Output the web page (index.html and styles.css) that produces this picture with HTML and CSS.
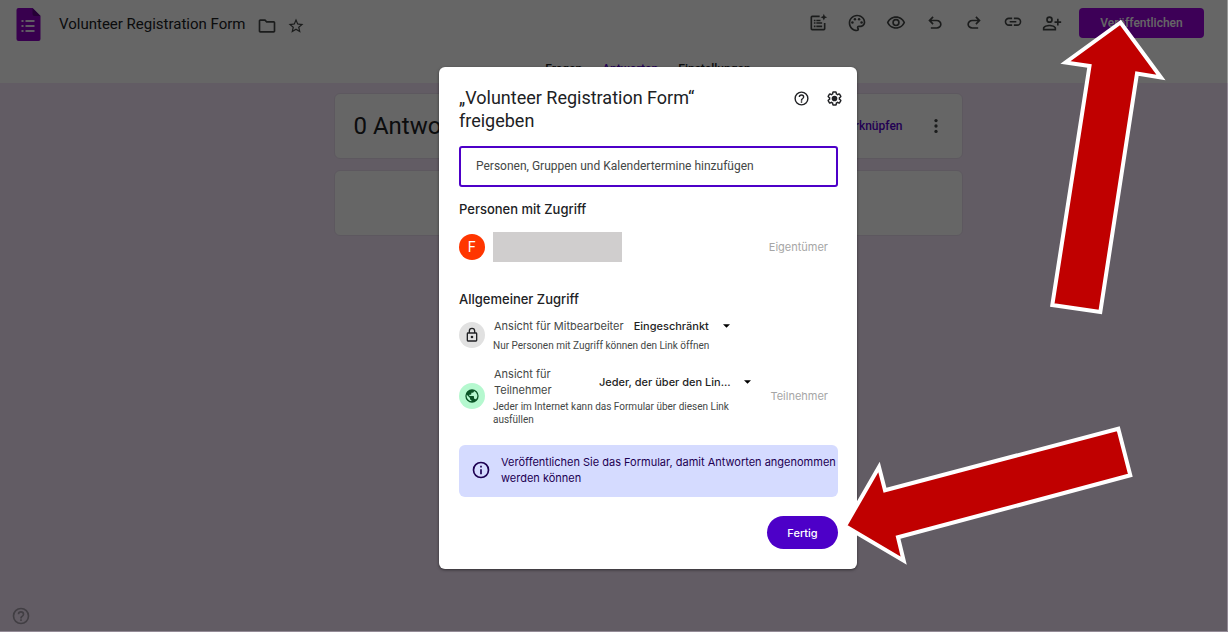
FILE: index.html
```html
<!DOCTYPE html>
<html lang="de">
<head>
<meta charset="utf-8">
<title>Volunteer Registration Form</title>
<link rel="stylesheet" href="styles.css">
</head>
<body>
<div class="page">
  <header class="header">
    <div class="topbar">
      <svg class="logo" viewBox="0 0 24 33" aria-hidden="true">
        <path fill="#8c00c4" d="M2 0h14l8 8v23a2 2 0 0 1-2 2H2a2 2 0 0 1-2-2V2a2 2 0 0 1 2-2z"/>
        <path fill="#5c0085" d="M16 0l8 8h-6a2 2 0 0 1-2-2z"/>
        <path fill="#f0e0f8" d="M5 12h2v2H5zm4 0h9v2H9zm-4 5h2v2H5zm4 0h9v2H9zm-4 5h2v2H5zm4 0h9v2H9z"/>
      </svg>
      <h1 class="doc-title">Volunteer Registration Form</h1>
      <div class="doc-actions">
        <button class="icon-button" aria-label="Verschieben"><svg class="icon" viewBox="0 0 24 24"><path d="M9.17 6l2 2H20v10H4V6h5.17M10 4H4c-1.1 0-1.99.9-1.99 2L2 18c0 1.1.9 2 2 2h16c1.1 0 2-.9 2-2V8c0-1.1-.9-2-2-2h-8l-2-2z"/></svg></button>
        <button class="icon-button" aria-label="Markieren"><svg class="icon icon-small" viewBox="0 0 24 24"><path d="M22 9.24l-7.19-.62L12 2 9.19 8.63 2 9.24l5.46 4.73L5.82 21 12 17.27 18.18 21l-1.63-7.03L22 9.24zM12 15.4l-3.76 2.27 1-4.28-3.32-2.88 4.38-.38L12 6.1l1.71 4.04 4.38.38-3.32 2.88 1 4.28L12 15.4z"/></svg></button>
      </div>
      <div class="tools">
        <button class="icon-button" aria-label="Formular erstellen"><svg class="icon" viewBox="0 0 24 24"><path d="M14 3v2H5v14h14v-7h2v7a2 2 0 0 1-2 2H5a2 2 0 0 1-2-2V5a2 2 0 0 1 2-2zM7 8h2v2H7zm3 0h5v2h-5zM7 11h2v2H7zm3 0h7v2h-7zM7 15h2v2H7zm3 0h7v2h-7zM19 1l1.2 2.8L23 5l-2.800 1.200L19 9l-1.200-2.800L15 5l2.800-1.200z"/></svg></button>
        <button class="icon-button" aria-label="Design anpassen"><svg class="icon" viewBox="0 0 24 24"><path d="M12 22C6.490 22 2 17.510 2 12S6.490 2 12 2s10 4.040 10 9c0 3.310-2.690 6-6 6h-1.770c-.28 0-.5.22-.5.5 0 .12.050.23.130.33.410.470.640 1.060.640 1.670A2.500 2.500 0 0 1 12 22zm0-18c-4.410 0-8 3.590-8 8s3.590 8 8 8c.28 0 .5-.22.500-.5a.54.54 0 0 0-.14-.35c-.410-.46-.63-1.050-.63-1.650a2.500 2.500 0 0 1 2.500-2.500H16c2.210 0 4-1.790 4-4 0-3.860-3.590-7-8-7z"/><circle cx="6.500" cy="11.500" r="1.500"/><circle cx="9.500" cy="7.500" r="1.500"/><circle cx="14.500" cy="7.500" r="1.500"/><circle cx="17.500" cy="11.500" r="1.500"/></svg></button>
        <button class="icon-button" aria-label="Vorschau"><svg class="icon" viewBox="0 0 24 24"><path d="M12 6a9.770 9.770 0 0 1 8.820 5.500 9.760 9.760 0 0 1-17.640 0A9.770 9.770 0 0 1 12 6m0-2C7 4 2.730 7.110 1 11.500 2.730 15.890 7 19 12 19s9.270-3.110 11-7.500C21.270 7.110 17 4 12 4zm0 5a2.500 2.500 0 1 1 0 5 2.500 2.500 0 0 1 0-5m0-2a4.500 4.500 0 1 0 0 9 4.500 4.500 0 0 0 0-9z"/></svg></button>
        <button class="icon-button" aria-label="Rückgängig"><svg class="icon" viewBox="0 0 24 24"><path d="M7 19v-2h7.100q1.575 0 2.738-1T18 13.500 16.838 11 14.100 10H7.800l2.600 2.600L9 14 4 9l5-5 1.400 1.400L7.800 8h6.300q2.425 0 4.163 1.575T20 13.500t-1.737 3.925T14.100 19z"/></svg></button>
        <button class="icon-button" aria-label="Wiederholen"><svg class="icon" viewBox="0 0 24 24"><path d="M9.900 19q-2.425 0-4.163-1.575T4 13.500t1.737-3.925T9.900 8h6.300l-2.600-2.600L15 4l5 5-5 5-1.400-1.400 2.600-2.600H9.900q-1.575 0-2.738 1T6 13.500 7.162 16 9.900 17H17v2z"/></svg></button>
        <button class="icon-button" aria-label="Link kopieren"><svg class="icon" viewBox="0 0 24 24"><path d="M3.900 10.500c0-1.710 1.390-3.100 3.100-3.100h4V5.500H7a5 5 0 0 0 0 10h4v-1.900H7c-1.710 0-3.100-1.390-3.100-3.100zM8 11.500h8v-2H8zm9-6h-4v1.900h4a3.100 3.100 0 0 1 0 6.200h-4v1.900h4a5 5 0 0 0 0-10z"/></svg></button>
        <button class="icon-button" aria-label="Mitbearbeiter hinzufügen"><svg class="icon" viewBox="0 0 24 24"><path d="M9 12a4 4 0 1 0 0-8 4 4 0 0 0 0 8zm0-6a2 2 0 1 1 0 4 2 2 0 0 1 0-4zm0 8c-2.670 0-8 1.340-8 4v3h16v-3c0-2.660-5.330-4-8-4zm6 5H3v-.99C3.200 17.290 6.300 16 9 16s5.800 1.290 6 2zm5-9V7h-2v3h-3v2h3v3h2v-3h3v-2z"/></svg></button>
      </div>
      <button class="publish">Veröffentlichen</button>
    </div>
    <nav class="tabs">
      <a class="tab" href="#fragen">Fragen</a>
      <a class="tab tab-active" href="#antworten">Antworten</a>
      <a class="tab" href="#einstellungen">Einstellungen</a>
    </nav>
  </header>
  <main class="content">
    <section class="card">
      <h2 class="card-title">0 Antworten</h2>
      <a class="card-link" href="#tabelle">Mit Google Tabellen verknüpfen</a>
      <button class="icon-button" aria-label="Weitere Optionen"><svg class="icon" viewBox="0 0 24 24"><circle cx="12" cy="5.500" r="2"/><circle cx="12" cy="12" r="2"/><circle cx="12" cy="18.500" r="2"/></svg></button>
    </section>
    <section class="card"></section>
  </main>
  <footer class="footer">
    <button class="icon-button help" aria-label="Hilfe"><svg class="icon" viewBox="0 0 24 24"><path d="M11 18h2v-2h-2v2zm1-16a10 10 0 1 0 0 20 10 10 0 0 0 0-20zm0 18a8 8 0 1 1 0-16 8 8 0 0 1 0 16zm0-14a4 4 0 0 0-4 4h2a2 2 0 1 1 4 0c0 2-3 1.750-3 5h2c0-2.250 3-2.500 3-5a4 4 0 0 0-4-4z"/></svg></button>
  </footer>
</div>

<div class="backdrop">
  <div class="dialog" role="dialog" aria-modal="true" aria-labelledby="dialog-title">
    <div class="dialog-head">
      <h2 class="dialog-title" id="dialog-title">„Volunteer Registration Form“ freigeben</h2>
      <div class="dialog-tools">
        <button class="icon-button" aria-label="Hilfe"><svg class="icon" viewBox="0 0 24 24"><path d="M11 18h2v-2h-2v2zm1-16a10 10 0 1 0 0 20 10 10 0 0 0 0-20zm0 18a8 8 0 1 1 0-16 8 8 0 0 1 0 16zm0-14a4 4 0 0 0-4 4h2a2 2 0 1 1 4 0c0 2-3 1.750-3 5h2c0-2.250 3-2.500 3-5a4 4 0 0 0-4-4z"/></svg></button>
        <button class="icon-button" aria-label="Einstellungen"><svg class="icon" viewBox="0 0 24 24"><path d="M13.850 22.250h-3.700c-.74 0-1.360-.54-1.450-1.270l-.27-1.890c-.27-.14-.53-.29-.79-.46l-1.800.72c-.7.260-1.470-.03-1.810-.65L2.200 15.530c-.35-.66-.2-1.440.36-1.880l1.530-1.190c-.01-.15-.02-.3-.02-.46 0-.15.010-.31.020-.46l-1.520-1.190c-.59-.45-.74-1.260-.37-1.880l1.850-3.190c.34-.62 1.110-.9 1.790-.63l1.810.73c.26-.17.520-.32.780-.46l.27-1.910c.090-.7.710-1.250 1.440-1.250h3.700c.74 0 1.360.54 1.450 1.270l.27 1.890c.27.140.53.290.79.460l1.800-.72c.71-.26 1.480.03 1.820.65l1.840 3.180c.36.660.2 1.440-.36 1.880l-1.520 1.190c.010.150.020.3.020.46s-.010.310-.020.460l1.520 1.190c.56.450.72 1.230.37 1.860l-1.860 3.220c-.34.620-1.110.9-1.800.63l-1.800-.72c-.26.170-.52.320-.78.460l-.27 1.910c-.1.680-.72 1.220-1.460 1.220zm-3.230-2h2.760l.37-2.550.53-.22c.44-.18.880-.44 1.340-.78l.45-.34 2.380.96 1.380-2.400-2.030-1.580.070-.56c.030-.26.060-.51.060-.78s-.030-.53-.060-.78l-.07-.56 2.030-1.580-1.390-2.400-2.390.96-.45-.35c-.42-.32-.87-.58-1.330-.77l-.52-.22-.37-2.550h-2.760l-.37 2.550-.53.210c-.44.190-.88.440-1.340.79l-.45.330-2.380-.95-1.390 2.390 2.030 1.580-.07.560a7 7 0 0 0-.06.790c0 .26.020.53.060.78l.07.560-2.030 1.580 1.380 2.400 2.390-.96.450.35c.43.330.86.580 1.330.77l.53.220z"/><circle cx="12" cy="12" r="4"/></svg></button>
      </div>
    </div>
    <input class="people-input" type="text" aria-label="Personen, Gruppen und Kalendertermine hinzufügen" placeholder="Personen, Gruppen und Kalendertermine hinzufügen">
    <h3 class="section-title">Personen mit Zugriff</h3>
    <div class="person">
      <span class="badge badge-owner">F</span>
      <span class="redacted"></span>
      <span class="role">Eigentümer</span>
    </div>
    <h3 class="section-title">Allgemeiner Zugriff</h3>
    <div class="access">
      <span class="badge badge-lock"><svg class="icon" viewBox="0 0 24 24"><path d="M18 8h-1V6A5 5 0 0 0 7 6v2H6a2 2 0 0 0-2 2v10a2 2 0 0 0 2 2h12a2 2 0 0 0 2-2V10a2 2 0 0 0-2-2zM9 6a3 3 0 0 1 6 0v2H9zm9 14H6V10h12zm-6-3a2 2 0 1 0 0-4 2 2 0 0 0 0 4z"/></svg></span>
      <div class="access-body">
        <div class="access-line">
          <label class="access-label" for="editors">Ansicht für Mitbearbeiter</label>
          <span class="select-wrap">
            <select class="select" id="editors"><option>Eingeschränkt</option></select>
            <svg class="caret" viewBox="0 0 8 4"><path d="M0 0h8L4 4z"/></svg>
          </span>
        </div>
        <p class="hint">Nur Personen mit Zugriff können den Link öffnen</p>
      </div>
    </div>
    <div class="access access-public">
      <span class="badge badge-globe"><svg class="icon" viewBox="0 0 24 24"><path d="M12 2a10 10 0 1 0 0 20 10 10 0 0 0 0-20zm-1 17.930A8 8 0 0 1 4.210 10.210L9 15v1a2 2 0 0 0 2 2zm6.900-2.540A2 2 0 0 0 16 16h-1v-3a1 1 0 0 0-1-1H8v-2h2a1 1 0 0 0 1-1V7h2a2 2 0 0 0 2-2v-.41a8 8 0 0 1 2.900 12.800z"/></svg></span>
      <div class="access-body">
        <div class="access-line">
          <label class="access-label access-label-narrow" for="viewers">Ansicht für Teilnehmer</label>
          <span class="select-wrap">
            <select class="select" id="viewers"><option>Jeder, der über den Lin...</option></select>
            <svg class="caret" viewBox="0 0 8 4"><path d="M0 0h8L4 4z"/></svg>
          </span>
        </div>
        <p class="hint">Jeder im Internet kann das Formular über diesen Link ausfüllen</p>
      </div>
      <span class="role">Teilnehmer</span>
    </div>
    <div class="notice">
      <svg class="icon" viewBox="0 0 24 24"><path d="M11 7h2v2h-2zm0 4h2v6h-2zm1-9a10 10 0 1 0 0 20 10 10 0 0 0 0-20zm0 18a8 8 0 1 1 0-16 8 8 0 0 1 0 16z"/></svg>
      <p class="notice-text">Veröffentlichen Sie das Formular, damit Antworten angenommen werden können</p>
    </div>
    <div class="dialog-actions"><button class="done">Fertig</button></div>
  </div>
</div>

<svg class="arrows" viewBox="0 0 1228 632" aria-hidden="true">
  <polygon points="1120.500,22.500 1065.500,62.500 1089.500,66 1052.300,305 1100.300,312 1137,73.500 1161,77.500"/>
  <polygon points="845,526 879,467 885,490.300 1118.300,428.700 1130.300,475.300 898,537.300 903.700,560.700"/>
</svg>
</body>
</html>
```
FILE: styles.css
```css
* {
  box-sizing: border-box;
}

body {
  margin: 0;
  background: #f5e6fa;
  color: #202124;
  font-family: Inter, Roboto, "Liberation Sans", sans-serif;
  font-size: 11px;
  line-height: 16px;
}

h1, h2, h3, p {
  margin: 0;
  font-weight: 400;
}

button {
  border: 0;
  padding: 0;
  font: inherit;
  cursor: pointer;
}

.icon-button {
  display: flex;
  background: none;
  color: #444746;
}

.icon {
  display: block;
  width: 20px;
  height: 20px;
  fill: currentColor;
}

.icon-small {
  width: 18px;
  height: 18px;
}

.page {
  display: flex;
  flex-direction: column;
  min-height: 100vh;
  font-family: Roboto, sans-serif;
  font-size: 12px;
}

.header {
  background: #fff;
  height: 83px;
}

.topbar {
  display: flex;
  align-items: center;
  height: 48px;
  padding: 0 24px 0 16px;
}

.logo {
  width: 25px;
  height: 33px;
}

.doc-title {
  margin-left: 18px;
  font-size: 15px;
  line-height: 20px;
}

.doc-actions {
  display: flex;
  align-items: center;
  gap: 10px;
  margin-left: 11px;
  padding-top: 4px;
}

.tools {
  display: flex;
  gap: 19px;
  margin-left: auto;
  padding-bottom: 3px;
}

.publish {
  width: 125px;
  height: 30px;
  margin: 0 0 3px 17px;
  border-radius: 4px;
  background: #9900da;
  color: #fff;
  font-weight: 500;
}

.tabs {
  display: flex;
  justify-content: center;
  gap: 20px;
  padding: 13px 0 0 68px;
}

.tab {
  color: #202124;
  font-weight: 500;
  text-decoration: none;
}

.tab-active {
  color: #5500d0;
}

.content {
  display: flex;
  flex: 1;
  flex-direction: column;
  align-items: center;
  gap: 11px;
  padding: 10px 0 0 68px;
}

.card {
  display: flex;
  align-items: center;
  width: 100%;
  max-width: 629px;
  min-height: 66px;
  padding: 0 16px 0 19px;
  border: 1px solid #e8dcee;
  border-radius: 6px;
  background: #fff;
}

.card-title {
  font-size: 24px;
  line-height: 32px;
}

.card-link {
  margin: 0 23px 0 auto;
  color: #5500d0;
  font-weight: 500;
  text-decoration: none;
}

.footer {
  padding: 0 11px 6px;
}

.help {
  color: #a49ca8;
}

.backdrop {
  position: absolute;
  inset: 0;
  display: flex;
  align-items: flex-start;
  justify-content: center;
  padding: 67px 0 0 69px;
  border: 0 solid rgba(0, 0, 0, 0.4);
  border-width: 0 1px 1px 0;
  background: rgba(0, 0, 0, 0.6);
  background-clip: padding-box;
}

.dialog {
  width: 418px;
  padding: 19px 19px 20px 20px;
  border-radius: 6px;
  background: #fff;
  box-shadow: 0 1px 3px rgba(0, 0, 0, 0.5);
}

.dialog-head {
  display: flex;
  justify-content: space-between;
  margin-bottom: 14px;
}

.dialog-title {
  max-width: 280px;
  font-family: Roboto, sans-serif;
  font-size: 18px;
  line-height: 23px;
}

.dialog-tools {
  display: flex;
  align-items: flex-start;
  gap: 16px;
  margin-right: -5px;
  padding-top: 4px;
}

.dialog-tools .icon {
  width: 17px;
  height: 17px;
  color: #202124;
}

.people-input {
  display: block;
  width: 100%;
  height: 41px;
  margin-bottom: 14px;
  padding: 0 15px 2px;
  border: 2px solid #4d00c8;
  border-radius: 3px;
  font-family: Roboto, sans-serif;
  font-size: 12px;
  outline: none;
}

.people-input::placeholder {
  color: #444746;
  opacity: 1;
}

.section-title {
  font-size: 13px;
  font-weight: 500;
  line-height: 16px;
}

.person {
  display: flex;
  align-items: center;
  gap: 8px;
  margin: 15px 0 29px;
  padding-right: 10px;
}

.badge {
  display: flex;
  flex: none;
  align-items: center;
  justify-content: center;
  width: 26px;
  height: 26px;
  border-radius: 50%;
}

.badge .icon {
  width: 16px;
  height: 16px;
}

.badge-owner {
  background: #ff3600;
  color: #fff;
  font-size: 14px;
}

.badge-lock {
  background: #e1e1e1;
}

.badge-globe {
  background: #b5f8cf;
  color: #0a5426;
}

.redacted {
  width: 129px;
  height: 30px;
  background: #d0cece;
}

.role {
  margin-left: auto;
  color: #a6a6a6;
}

.access {
  display: flex;
  align-items: center;
  gap: 8px;
  margin-top: 11px;
  padding-right: 10px;
}

.access-body {
  width: 265px;
}

.access-line {
  display: flex;
  align-items: center;
  gap: 10px;
  padding-left: 1px;
}

.access-label {
  color: #444746;
}

.access-label-narrow {
  width: 95px;
  padding-right: 30px;
}

.select-wrap {
  display: flex;
  align-items: center;
  gap: 13px;
}

.select {
  appearance: none;
  border: 0;
  padding: 0;
  background: none;
  color: #1f1f1f;
  font: inherit;
  font-weight: 500;
}

.caret {
  width: 7px;
  height: 4px;
}

.hint {
  max-width: 246px;
  margin-top: 5px;
  color: #444746;
  font-family: Roboto, sans-serif;
  font-size: 10px;
  line-height: 13px;
}

.access-public {
  margin-top: 14px;
}

.access-public .hint {
  margin-top: 2px;
}

.notice {
  display: flex;
  align-items: center;
  gap: 10px;
  margin-top: 19px;
  padding: 9px 0 11px 12px;
  border-radius: 6px;
  background: #d5dbff;
  color: #1d0052;
}

.notice .icon {
  flex: none;
}

.dialog-actions {
  display: flex;
  justify-content: flex-end;
  margin-top: 19px;
}

.done {
  width: 71px;
  height: 33px;
  border-radius: 17px;
  background: #4d00c8;
  color: #fff;
  font-weight: 500;
}

.arrows {
  position: absolute;
  top: 0;
  left: 0;
  width: 1228px;
  height: 632px;
  fill: #c00000;
  stroke: #fff;
  stroke-width: 4px;
  stroke-miterlimit: 10;
  pointer-events: none;
}
```
